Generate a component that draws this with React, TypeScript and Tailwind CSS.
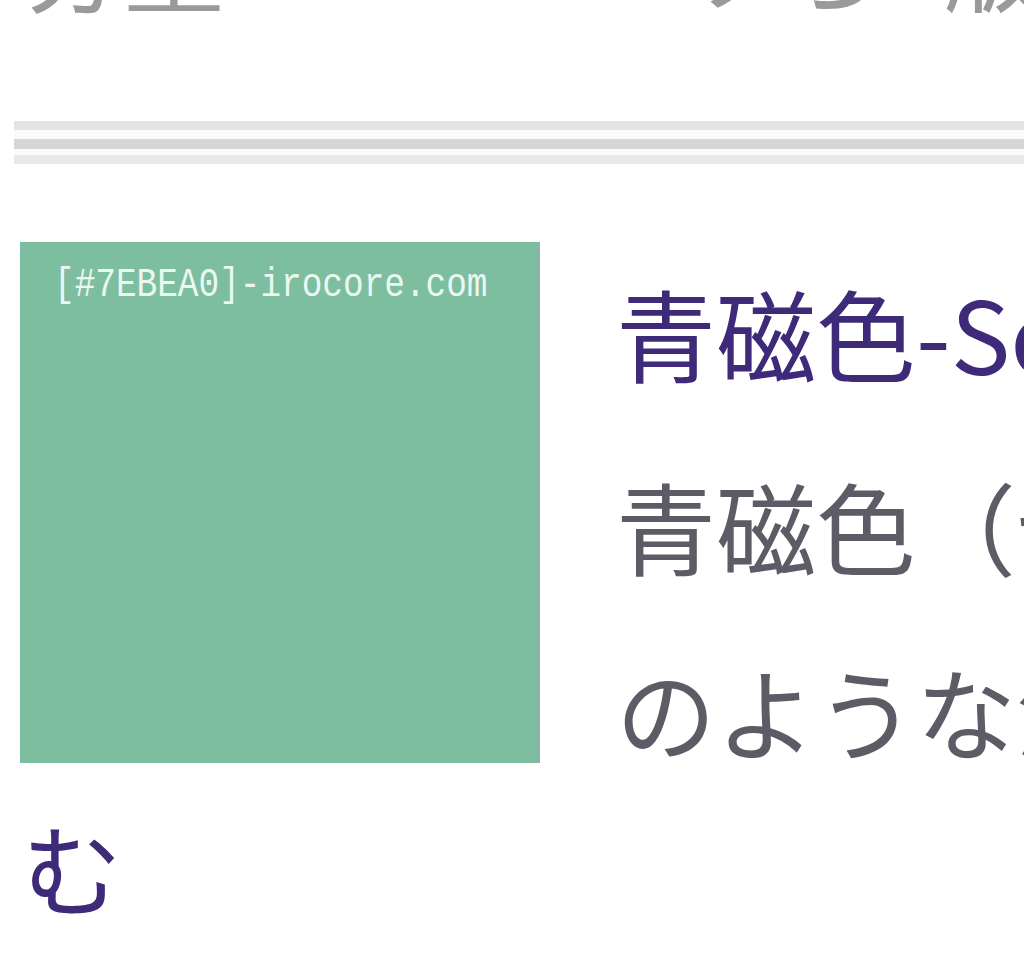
import React from "react";

const jp = { fontFamily: '"Noto Sans CJK JP", "Noto Sans", sans-serif' };

const App: React.FC = () => {
  return (
    <div className="w-[1024px] h-[979px] overflow-hidden bg-white" style={jp}>
      {/* cut-off line from the previous block */}
      <div className="-mt-[96px] h-[108px] flex items-end whitespace-nowrap text-[100px] leading-none text-[#9a9a9a]">
        <span className="ml-[24px]">分量</span>
        <span className="ml-[460px]">ソら</span>
        <span className="ml-[60px]">版</span>
      </div>

      {/* divider */}
      <div className="mt-[109px] ml-[14px] flex flex-col">
        <div className="h-[9px] bg-[#e4e4e4]" />
        <div className="h-[9px] bg-[#fafafa]" />
        <div className="h-[10px] bg-[#d5d5d5]" />
        <div className="h-[6px] bg-[#fbfbfb]" />
        <div className="h-[9px] bg-[#e9e9e9]" />
      </div>

      {/* result */}
      <div className="mt-[78px] flex items-start whitespace-nowrap">
        <div className="ml-[20px] w-[520px] h-[521px] shrink-0 bg-[#7ebea0] border-r-[4px] border-[#84b8a1] pt-[24px] pl-[34px]">
          <div
            className="origin-left scale-x-[0.86] text-[40px] leading-none text-[#eaf8f1]"
            style={{ fontFamily: '"Liberation Mono", monospace' }}
          >
            [#7EBEA0]-irocore.com
          </div>
        </div>
        <div className="ml-[76px] flex flex-col">
          <div className="text-[100px] leading-[120px] text-[#3e2a78] mt-[30px]">
            青磁色-Seijiiro
          </div>
          <div className="text-[100px] leading-[185px] text-[#5c5c66] mt-[40px]">
            <div>青磁色（せいじいろ）とは</div>
            <div>のような淡い青緑色</div>
          </div>
        </div>
      </div>

      <div className="ml-[22px] mt-[4px] text-[100px] leading-[120px] text-[#3e2a78]">む</div>
    </div>
  );
};

export default App;
